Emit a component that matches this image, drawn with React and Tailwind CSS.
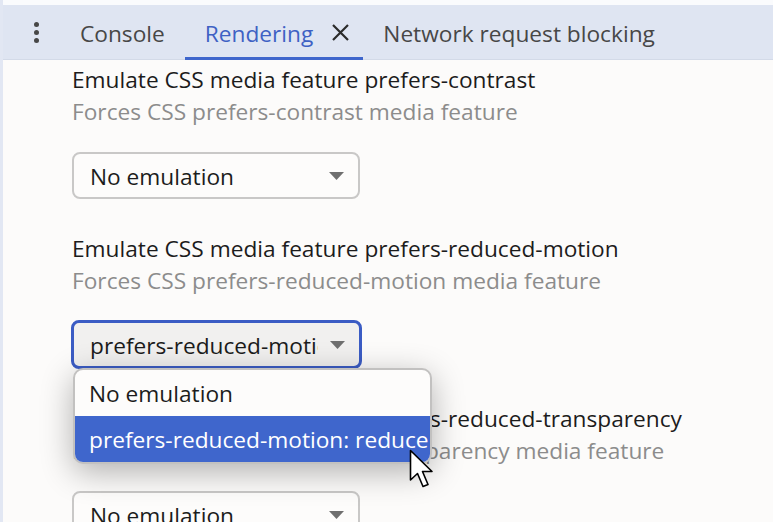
import React from 'react'

const FONT = { fontFamily: '"Open Sans", "Noto Sans", sans-serif' }

function Caret() {
  return (
    <svg width="15" height="8" viewBox="0 0 15 8" className="shrink-0" aria-hidden="true">
      <path d="M0 0 L15 0 L7.5 8 Z" fill="#6f6f6f" />
    </svg>
  )
}

function Select({ value, focused }) {
  const box = focused
    ? 'border-[3px] border-[#3b5cc4] bg-[#f1f0ef] pl-[16px] pr-[14px] w-[291px] h-[49px] -ml-[1px] -mt-[1px]'
    : 'border-2 border-[#c9c8c7] bg-[#fdfcfb] pl-[16px] pr-[14px] w-[288px] h-[47px]'
  return (
    <div className={`rounded-[8px] flex items-center ${box}`}>
      <span className="flex-1 min-w-0 mr-[12px] pt-[3px] whitespace-nowrap overflow-hidden text-[#1c1c1c]">{value}</span>
      <Caret />
    </div>
  )
}

function Feature({ name, children }) {
  return (
    <section className="flex flex-col">
      <h2 className="leading-[32px] text-[#1c1c1c] whitespace-nowrap">Emulate CSS media feature {name}</h2>
      <p className="leading-[32px] text-[#8c8c8c] whitespace-nowrap">Forces CSS {name} media feature</p>
      <div className="mt-[24px]">{children}</div>
    </section>
  )
}

function Cursor() {
  return (
    <svg width="27" height="40" viewBox="0 0 27 40" className="absolute left-[406px] top-[449px]" aria-hidden="true">
      <path d="M1.5 1.5 L1.5 31 L8.5 24.5 L14 37.5 L19 35.5 L13.5 22.5 L23 22.5 Z" fill="#ffffff" stroke="#000000" strokeWidth="1.6" strokeLinejoin="round" />
    </svg>
  )
}

export default function App() {
  return (
    <div className="relative w-[773px] h-[522px] overflow-hidden bg-[#fcfbfa] text-[22.7px] border-l-[3px] border-[#e2e7f3]" style={FONT}>
      <div className="h-[5px] bg-[#fafbfd]" />
      <nav className="h-[55px] pt-[4px] bg-[#dfe5f2] flex items-stretch border-b border-[#d3dae8]">
        <div className="w-[57px] flex items-center justify-center">
          <div className="flex flex-col gap-[3px] ml-[10px] -mt-[4px]">
            <span className="w-[5px] h-[5px] rounded-full bg-[#474747]" />
            <span className="w-[5px] h-[5px] rounded-full bg-[#474747]" />
            <span className="w-[5px] h-[5px] rounded-full bg-[#474747]" />
          </div>
        </div>
        <div className="px-[20px] flex items-center text-[#474747]">Console</div>
        <div className="relative pl-[20px] pr-[13px] flex items-center gap-[18px] text-[#3e61c4]">
          <span>Rendering</span>
          <svg width="19" height="19" viewBox="0 0 19 19" className="-mt-[3px]" aria-hidden="true">
            <path d="M2 2 L17 17 M17 2 L2 17" stroke="#2b2b2b" strokeWidth="2.2" />
          </svg>
          <span className="absolute left-0 right-0 bottom-[-1px] h-[3px] bg-[#3f66cc]" />
        </div>
        <div className="px-[20px] flex items-center text-[#474747]">Network request blocking</div>
      </nav>

      <main className="pl-[69px] pt-[4px] flex flex-col gap-[34px]">
        <Feature name="prefers-contrast">
          <Select value="No emulation" />
        </Feature>
        <Feature name="prefers-reduced-motion">
          <Select value="prefers-reduced-motion: reduce" focused />
        </Feature>
        <Feature name="prefers-reduced-transparency">
          <Select value="No emulation" />
        </Feature>
      </main>

      <div className="absolute left-[70px] top-[368px] w-[359px] rounded-[10px] border-2 border-[#c2c1c0] bg-[#fdfcfb] overflow-hidden shadow-[0_8px_32px_rgba(0,0,0,0.3)]">
        <div className="h-[46px] pl-[14px] pt-[2px] flex items-center text-[#1c1c1c] whitespace-nowrap">No emulation</div>
        <div className="h-[46px] pl-[14px] pt-[2px] flex items-center bg-[#3f66cc] text-white whitespace-nowrap">prefers-reduced-motion: reduce</div>
      </div>

      <Cursor />
    </div>
  )
}
